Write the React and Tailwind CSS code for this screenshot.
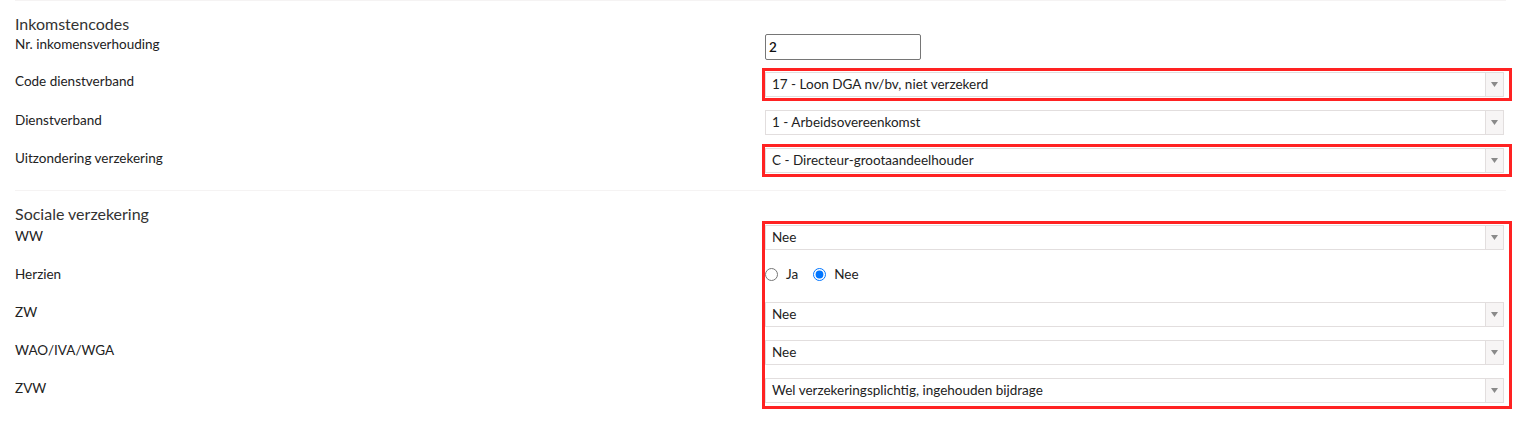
import React from "react";

const font = { fontFamily: "Lato, 'Noto Sans', sans-serif" };

function Select({ value }) {
  return (
    <div className="flex h-[25px] w-[739px] items-stretch border border-[#e2dede] bg-white">
      <div className="flex flex-1 items-center pl-[6px] text-[13.5px] text-[#222]">{value}</div>
      <div className="flex w-[18px] items-center justify-center border-l border-[#e2dede] bg-[#f7f5f5]">
        <svg width="7" height="5" viewBox="0 0 7 5">
          <path d="M0 0H7L3.5 5Z" fill="#8a8a8a" />
        </svg>
      </div>
    </div>
  );
}

function Row({ label, children, labelPt = "pt-[2px]" }) {
  return (
    <div className="flex h-[38px] items-start">
      <div className={`w-[750px] text-[13.5px] leading-[16px] text-[#222] ${labelPt}`}>{label}</div>
      <div>{children}</div>
    </div>
  );
}

function Highlight({ bottom = "-bottom-[4px]" }) {
  return (
    <div
      className={`pointer-events-none absolute -left-[3px] -right-[8px] -top-[4px] ${bottom} border-[3px] border-[#ff2222]`}
    />
  );
}

const lbl = "h-[38px] pt-[3px] text-[13.5px] leading-[16px] text-[#222]";

export default function App() {
  return (
    <div className="min-h-[423px] w-[1521px] bg-white" style={font}>
      <div className="ml-[15px] mr-[15px] border-t border-[#f5f3f3]">
        <div className="flex h-[33px] items-end pb-[1px] text-[16px] leading-[18px] text-[#333]">
          Inkomstencodes
        </div>
        <Row label="Nr. inkomensverhouding">
          <div className="flex h-[26px] w-[156px] items-center rounded-[2px] border border-[#767676] pl-[3px] text-[13.5px] font-semibold text-[#111]">
            2
          </div>
        </Row>
        <Row label="Code dienstverband" labelPt="pt-[1px]">
          <div className="relative">
            <Select value="17 - Loon DGA nv/bv, niet verzekerd" />
            <Highlight />
          </div>
        </Row>
        <Row label="Dienstverband" labelPt="pt-[2px]">
          <Select value="1 - Arbeidsovereenkomst" />
        </Row>
        <Row label="Uitzondering verzekering" labelPt="pt-[2px]">
          <div className="relative">
            <Select value="C - Directeur-grootaandeelhouder" />
            <Highlight />
          </div>
        </Row>
      </div>

      <div className="ml-[15px] mr-[15px] mt-[4px] border-t border-[#f5f3f3]">
        <div className="flex h-[34px] items-end pb-[2px] text-[16px] leading-[18px] text-[#333]">
          Sociale verzekering
        </div>
        <div className="flex items-start">
          <div className="w-[750px]">
            <div className={lbl}>WW</div>
            <div className={lbl}>Herzien</div>
            <div className={lbl}>ZW</div>
            <div className={lbl}>WAO/IVA/WGA</div>
            <div className={lbl}>ZVW</div>
          </div>
          <div className="relative">
            <div className="h-[38px]">
              <Select value="Nee" />
            </div>
            <div className="flex h-[39px] items-start pt-[1px] text-[13.5px] text-[#222]">
              <label className="flex items-center">
                <input type="radio" name="herzien" className="h-[13px] w-[13px]" />
                <span className="ml-[8px]">Ja</span>
              </label>
              <label className="ml-[15px] flex items-center">
                <input type="radio" name="herzien" defaultChecked className="h-[13px] w-[13px]" />
                <span className="ml-[8px]">Nee</span>
              </label>
            </div>
            <div className="h-[38px]">
              <Select value="Nee" />
            </div>
            <div className="h-[38px]">
              <Select value="Nee" />
            </div>
            <div className="h-[25px]">
              <Select value="Wel verzekeringsplichtig, ingehouden bijdrage" />
            </div>
            <Highlight bottom="-bottom-[6px]" />
          </div>
        </div>
      </div>
    </div>
  );
}
